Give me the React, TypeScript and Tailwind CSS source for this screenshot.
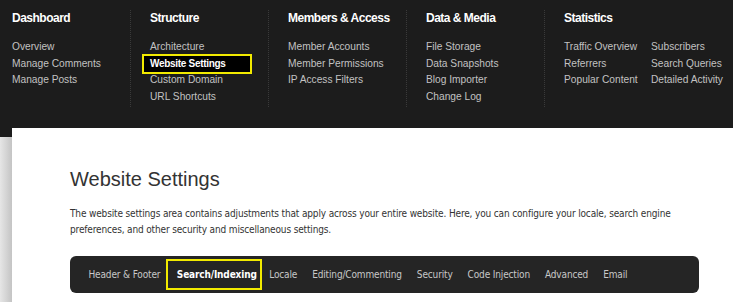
import React from "react";

const cols = [
  { title: "Dashboard", links: ["Overview", "Manage Comments", "Manage Posts"] },
  { title: "Structure", links: ["Architecture", "Website Settings", "Custom Domain", "URL Shortcuts"] },
  { title: "Members & Access", links: ["Member Accounts", "Member Permissions", "IP Access Filters"] },
  { title: "Data & Media", links: ["File Storage", "Data Snapshots", "Blog Importer", "Change Log"] },
];

const tabs = ["Header & Footer", "Search/Indexing", "Locale", "Editing/Commenting", "Security", "Code Injection", "Advanced", "Email"];

function LinkList({ links }: { links: string[] }) {
  return (
    <ul className="mt-[13px] whitespace-nowrap text-[10.2px] leading-[16.5px] text-[#c2c2c2]">
      {links.map((l) =>
        l === "Website Settings" ? (
          <li
            key={l}
            className="-mx-[8px] -my-[1.75px] h-[20px] w-[110px] border-2 border-[#f2ea00] bg-black px-[6px] text-[10px] font-bold leading-[16px] tracking-[-0.3px] text-white"
          >
            {l}
          </li>
        ) : (
          <li key={l}>{l}</li>
        )
      )}
    </ul>
  );
}

const head = "whitespace-nowrap text-[12px] font-bold leading-[16px] tracking-[-0.5px] text-white";

export default function App() {
  return (
    <div className="min-h-[302px] w-[733px] overflow-hidden bg-white" style={{ fontFamily: '"Liberation Sans", Arial, sans-serif' }}>
      <div className="flex h-[128px] bg-[#1c1c1c] pt-[10px]">
        {cols.map((c, i) => (
          <div
            key={c.title}
            className={
              i === 0
                ? "h-[97px] w-[130px] pl-[12px]"
                : "h-[97px] w-[138px] border-l border-dotted border-[#3a3a3a] pl-[19px]"
            }
          >
            <div className={head}>{c.title}</div>
            <LinkList links={c.links} />
          </div>
        ))}
        <div className="h-[97px] flex-1 border-l border-dotted border-[#3a3a3a] pl-[19px]">
          <div className={head}>Statistics</div>
          <div className="flex">
            <div className="w-[87px]">
              <LinkList links={["Traffic Overview", "Referrers", "Popular Content"]} />
            </div>
            <LinkList links={["Subscribers", "Search Queries", "Detailed Activity"]} />
          </div>
        </div>
      </div>
      <div className="flex">
        <div className="flex w-[12px] flex-col">
          <div className="h-[9px] bg-[#1c1c1c]" />
          <div className="h-[170px] bg-gradient-to-r from-[#e6e6e6] to-[#c4c4c4]" />
        </div>
        <div className="flex-1 bg-white pl-[58px] pr-[34px] pt-[39px]">
          <h1 className="text-[20px] leading-[24px] text-[#333]">Website Settings</h1>
          <p
            className="mt-[15px] text-[10px] leading-[16px] tracking-[-0.15px] text-[#333]"
            style={{ fontFamily: '"DejaVu Sans Condensed", "DejaVu Sans", sans-serif' }}
          >
            The website settings area contains adjustments that apply across your entire website. Here, you can configure your locale, search engine preferences, and other security and miscellaneous settings.
          </p>
          <div
            className="mt-[18px] flex h-[37px] items-center whitespace-nowrap rounded-[6px] bg-[#252525] pl-[11px] text-[10px] tracking-[-0.15px] text-[#c8c8c8]"
            style={{ fontFamily: '"DejaVu Sans Condensed", "DejaVu Sans", sans-serif' }}
          >
            {tabs.map((t) =>
              t === "Search/Indexing" ? (
                <div key={t} className="-ml-[2px] flex h-[31px] items-center border-2 border-[#f2ea00] pl-[9px] pr-[3px] font-bold text-white">
                  {t}
                </div>
              ) : (
                <div key={t} className="px-[7.5px]">{t}</div>
              )
            )}
          </div>
        </div>
      </div>
    </div>
  );
}
